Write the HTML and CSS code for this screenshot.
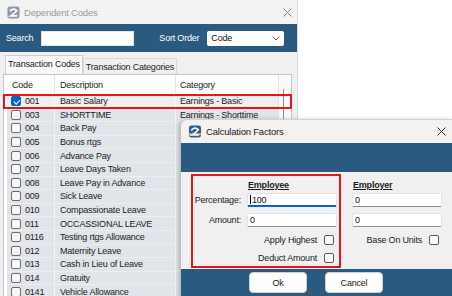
FILE: index.html
```html
<!DOCTYPE html>
<html lang="en">
<head>
    <meta charset="UTF-8">
    <meta name="viewport" content="width=device-width, initial-scale=1.0">
    <title>Dependent Codes</title>
    <link rel="stylesheet" href="styles.css">
</head>
<body>
<div class="screen">
    <!-- Main window -->
    <div class="win">
        <div class="titlebar">
            <svg class="app-icon" width="13" height="13" viewBox="0 0 14 14">
                <rect x="0.5" y="0.5" width="13" height="13" rx="2.5" fill="#8d99a6"/>
                <path d="M3.5 5.2 Q7 1.8 10.5 5 Q8 8 3.8 10.6 L10.5 10.6" stroke="#fff" stroke-width="1.7" fill="none" stroke-linecap="round"/>
            </svg>
            <span class="title inactive">Dependent Codes</span>
            <svg class="close" width="9" height="9" viewBox="0 0 9 9">
                <path d="M0.5 0.5 L8.5 8.5 M8.5 0.5 L0.5 8.5" stroke="#8c8c8c" stroke-width="1"/>
            </svg>
        </div>

        <div class="toolbar">
            <span class="tb-label">Search</span>
            <span class="textbox search-box"></span>
            <span class="tb-label sort-label">Sort Order</span>
            <span class="combo">Code
                <svg class="chevron" width="8" height="5" viewBox="0 0 8 5"><path d="M0.5 0.5 L4 4 L7.5 0.5" stroke="#555" fill="none"/></svg>
            </span>
        </div>

        <div class="panel">
            <div class="tabs">
                <span class="tab active">Transaction Codes</span>
                <span class="tab">Transaction Categories</span>
            </div>

            <div class="grid">
                <div class="grid-main">
                    <div class="grid-head">
                        <span class="h-code">Code</span>
                        <span class="h-desc">Description</span>
                        <span class="h-cat">Category</span>
                    </div>
                    <div class="rows">
                        <div class="row current"><span class="c-code"><i class="cb checked"></i>001</span><span class="c-desc">Basic Salary</span><span class="c-cat">Earnings - Basic</span></div>
                        <div class="row"><span class="c-code"><i class="cb"></i>003</span><span class="c-desc">SHORTTIME</span><span class="c-cat">Earnings - Shorttime</span></div>
                        <div class="row"><span class="c-code"><i class="cb"></i>004</span><span class="c-desc">Back Pay</span><span class="c-cat"></span></div>
                        <div class="row"><span class="c-code"><i class="cb"></i>005</span><span class="c-desc">Bonus rtgs</span><span class="c-cat"></span></div>
                        <div class="row"><span class="c-code"><i class="cb"></i>006</span><span class="c-desc">Advance Pay</span><span class="c-cat"></span></div>
                        <div class="row"><span class="c-code"><i class="cb"></i>007</span><span class="c-desc">Leave Days Taken</span><span class="c-cat"></span></div>
                        <div class="row"><span class="c-code"><i class="cb"></i>008</span><span class="c-desc">Leave Pay in Advance</span><span class="c-cat"></span></div>
                        <div class="row"><span class="c-code"><i class="cb"></i>009</span><span class="c-desc">Sick Leave</span><span class="c-cat"></span></div>
                        <div class="row"><span class="c-code"><i class="cb"></i>010</span><span class="c-desc">Compassionate Leave</span><span class="c-cat"></span></div>
                        <div class="row"><span class="c-code"><i class="cb"></i>011</span><span class="c-desc">OCCASSIONAL LEAVE</span><span class="c-cat"></span></div>
                        <div class="row"><span class="c-code"><i class="cb"></i>0116</span><span class="c-desc">Testing rtgs Allowance</span><span class="c-cat"></span></div>
                        <div class="row"><span class="c-code"><i class="cb"></i>012</span><span class="c-desc">Maternity Leave</span><span class="c-cat"></span></div>
                        <div class="row"><span class="c-code"><i class="cb"></i>013</span><span class="c-desc">Cash in Lieu of Leave</span><span class="c-cat"></span></div>
                        <div class="row"><span class="c-code"><i class="cb"></i>014</span><span class="c-desc">Gratuity</span><span class="c-cat"></span></div>
                        <div class="row"><span class="c-code"><i class="cb"></i>0141</span><span class="c-desc">Vehicle Allowance</span><span class="c-cat"></span></div>
                    </div>
                </div>
                <div class="vscroll"><span class="thumb"></span></div>
            </div>
        </div>
    </div>

    <!-- red annotation around the selected row -->
    <div class="row-mark"></div>

    <!-- Calculation Factors dialog -->
    <div class="dialog">
        <div class="dlg-title">
            <svg class="app-icon" width="14" height="13" viewBox="0 0 14 14">
                <rect x="0.5" y="0.5" width="13" height="13" rx="2.5" fill="#2f5f8f"/>
                <rect x="0.5" y="9" width="13" height="2" fill="#e7b27a"/>
                <path d="M3.5 5.2 Q7 1.8 10.5 5 Q8 8 3.8 10.6 L10.5 10.6" stroke="#fff" stroke-width="1.7" fill="none" stroke-linecap="round"/>
            </svg>
            <span class="title">Calculation Factors</span>
            <svg class="close" width="9" height="9" viewBox="0 0 9 9">
                <path d="M0.5 0.5 L8.5 8.5 M8.5 0.5 L0.5 8.5" stroke="#333" stroke-width="1"/>
            </svg>
        </div>
        <div class="dlg-band"></div>
        <div class="dlg-body">
            <div class="emp-box">
                <div class="col-head"><span class="head-text">Employee</span></div>
                <div class="frow">
                    <span class="flabel">Percentage:</span>
                    <span class="field focused"><i class="caret"></i>100</span>
                </div>
                <div class="frow">
                    <span class="flabel">Amount:</span>
                    <span class="field">0</span>
                </div>
                <div class="crow first">
                    <span class="clabel">Apply Highest</span><i class="box"></i>
                </div>
                <div class="crow">
                    <span class="clabel">Deduct Amount</span><i class="box"></i>
                </div>
            </div>
            <div class="employer">
                <div class="col-head"><span class="head-text">Employer</span></div>
                <div class="frow"><span class="field">0</span></div>
                <div class="frow"><span class="field">0</span></div>
                <div class="crow first">
                    <span class="clabel">Base On Units</span><i class="box"></i>
                </div>
            </div>
        </div>
        <div class="dlg-foot">
            <span class="btn">Ok</span>
            <span class="btn">Cancel</span>
        </div>
    </div>
</div>
</body>
</html>
```

FILE: styles.css
```css
/* Dependent Codes + Calculation Factors */
body {
    margin: 0;
    background-color: #fff;
    font-family: "Liberation Sans", Arial, sans-serif;
    font-size: 9px;
    letter-spacing: -0.2px;
    color: #1b1b1b;
}

.screen {
    position: relative;
    width: 452px;
    height: 296px;
    overflow: hidden;
}

/* ---------- main window ---------- */
.win {
    width: 297px;
    height: 296px;
    background-color: #f0f0f0;
    border-right: 1px solid #dadada;
    display: flex;
    flex-direction: column;
}

.titlebar {
    height: 24px;
    display: flex;
    align-items: center;
    padding-left: 7px;
    background-color: #f3f3f3;
}

.title {
    margin-left: 4px;
    font-size: 9.5px;
}

.title.inactive {
    color: #9b9b9b;
}

.titlebar .close {
    margin-left: auto;
    margin-right: 5px;
}

.toolbar {
    height: 28px;
    background-color: #2a5a80;
    display: flex;
    align-items: center;
    padding-left: 6px;
}

.tb-label {
    color: #fff;
}

.textbox {
    height: 15px;
    background-color: #fff;
    border: 1px solid #e4e4e4;
    box-sizing: border-box;
}

.search-box {
    width: 93px;
    margin-left: 8px;
}

.sort-label {
    margin-left: 25px;
}

.combo {
    width: 77px;
    height: 15px;
    margin-left: 8px;
    background-color: #fff;
    border-radius: 2px;
    box-sizing: border-box;
    padding-left: 4px;
    display: flex;
    align-items: center;
    color: #111;
}

.combo .chevron {
    margin-left: auto;
    margin-right: 4px;
}

.panel {
    flex: 1;
    padding: 3px 0 0 3px;
    display: flex;
    flex-direction: column;
    min-height: 0;
}

.tabs {
    display: flex;
    align-items: flex-end;
    padding-left: 2px;
}

.tab {
    height: 16px;
    width: 94px;
    box-sizing: border-box;
    border: 1px solid #d9d9d9;
    border-bottom: none;
    display: flex;
    align-items: center;
    justify-content: center;
    background-color: #f0f0f0;
}

.tab.active {
    height: 19px;
    width: 78px;
    background-color: #f9f9f9;
    border-color: #d0d0d0;
    padding-bottom: 2px;
}

.grid {
    width: 289px;
    flex: 1;
    border: 1px solid #c6c6c6;
    border-bottom: none;
    background-color: #fff;
    display: flex;
    box-sizing: border-box;
}

.grid-main {
    width: 275px;
}

.grid-head {
    height: 20px;
    display: flex;
    align-items: center;
    background-color: #fff;
}

.grid-head span {
    height: 100%;
    display: flex;
    align-items: center;
    box-sizing: border-box;
}

.h-code {
    width: 50px;
    padding-left: 8px;
}

.h-desc {
    width: 121px;
    padding-left: 5px;
    border-left: 1px solid #e6e6e6;
}

.h-cat {
    flex: 1;
    padding-left: 4px;
    border-left: 1px solid #e6e6e6;
}

.rows {
    margin-left: 3px;
}

.row {
    height: 13.6px;
    display: flex;
    align-items: center;
    background-color: #e1e5ea;
    border-bottom: 1px solid #eaedf1;
    box-sizing: border-box;
}

.row.current {
    background-color: #efefef;
}

.row span {
    height: 100%;
    display: flex;
    align-items: center;
    box-sizing: border-box;
    white-space: nowrap;
}

.c-code {
    width: 47px;
    padding-left: 4px;
}

.c-desc {
    width: 121px;
    padding-left: 5px;
    border-left: 1px solid #f2f4f6;
}

.c-cat {
    flex: 1;
    padding-left: 4px;
    border-left: 1px solid #f2f4f6;
}

.cb {
    width: 10px;
    height: 10px;
    box-sizing: border-box;
    border: 1px solid #6b6b6b;
    border-radius: 2px;
    background-color: #f7f7f7;
    margin-right: 4px;
    position: relative;
}

.cb.checked {
    background-color: #0067c0;
    border-color: #0067c0;
}

.cb.checked::after {
    content: "";
    position: absolute;
    left: 2.5px;
    top: 0.5px;
    width: 2.5px;
    height: 5px;
    border: solid #fff;
    border-width: 0 1px 1px 0;
    transform: rotate(45deg);
}

.vscroll {
    width: 12px;
    border-left: 1px solid #e2e2e2;
    background-color: #fafafa;
    position: relative;
}

.thumb {
    position: absolute;
    left: 4px;
    top: 14px;
    width: 1px;
    height: 120px;
    background-color: #8a8a8a;
}

/* annotation box over row 001 */
.row-mark {
    position: absolute;
    left: 3px;
    top: 94px;
    width: 289px;
    height: 15px;
    border: 2px solid #e8141b;
    box-sizing: border-box;
}

/* ---------- dialog ---------- */
.dialog {
    position: absolute;
    left: 180px;
    top: 119px;
    width: 272px;
    height: 180px;
    background-color: #f0f0f0;
    border-left: 1px solid #bdbdbd;
    border-top: 1px solid #d3d3d3;
    border-radius: 7px 0 0 0;
    box-shadow: -1px 1px 5px rgba(0, 0, 0, 0.25);
    display: flex;
    flex-direction: column;
    overflow: hidden;
}

.dlg-title {
    height: 23px;
    background-color: #f4f1ee;
    display: flex;
    align-items: center;
    padding-left: 7px;
    flex-shrink: 0;
}

.dlg-title .title {
    margin-left: 4px;
    color: #1a1a1a;
}

.dlg-title .close {
    margin-left: auto;
    margin-right: 7px;
}

.dlg-band {
    height: 29px;
    background-color: #2a5a80;
    flex-shrink: 0;
}

.dlg-body {
    height: 97px;
    flex-shrink: 0;
    padding: 2px 0 0 10px;
    box-sizing: border-box;
    display: flex;
    align-items: flex-start;
}

.emp-box {
    width: 150px;
    height: 94px;
    border: 2px solid #e8141b;
    box-sizing: border-box;
    padding-left: 0;
}

.col-head {
    height: 17px;
    display: flex;
    align-items: center;
    padding-left: 55px;
}

.employer .col-head {
    padding-left: 1px;
}

.head-text {
    font-weight: bold;
    text-decoration: underline;
}

.frow {
    height: 14px;
    display: flex;
    align-items: center;
}

.frow + .frow {
    margin-top: 6px;
}

.flabel {
    width: 48px;
    margin-right: 6px;
    text-align: right;
}

.field {
    width: 90px;
    height: 14px;
    box-sizing: border-box;
    background-color: #fff;
    border: 1px solid #e3e3e3;
    border-bottom-color: #8d8d8d;
    border-radius: 2px;
    padding-left: 2px;
    display: flex;
    align-items: center;
    color: #111;
}

.field.focused {
    border-bottom: 2px solid #0067c0;
}

.caret {
    width: 1px;
    height: 9px;
    background-color: #000;
    margin-right: 1px;
}

.crow {
    height: 10px;
    margin-top: 8px;
    display: flex;
    align-items: center;
    justify-content: flex-end;
    padding-right: 5px;
}

.clabel {
    margin-right: 7px;
}

.box {
    width: 10px;
    height: 10px;
    box-sizing: border-box;
    border: 1px solid #5a5a5a;
    border-radius: 2px;
    background-color: #fbfbfb;
}

.employer {
    width: 90px;
    margin-left: 11px;
    margin-top: 2px;
}

.employer .crow {
    padding-right: 3px;
}

.dlg-foot {
    flex: 1;
    background-color: #2a5a80;
    display: flex;
    padding: 3px 0 0 68px;
    gap: 18px;
}

.btn {
    width: 58px;
    height: 21px;
    box-sizing: border-box;
    background-color: #fdfdfd;
    border: 1px solid #d2d2d2;
    border-radius: 4px;
    display: flex;
    align-items: center;
    justify-content: center;
    color: #1a1a1a;
}
```
